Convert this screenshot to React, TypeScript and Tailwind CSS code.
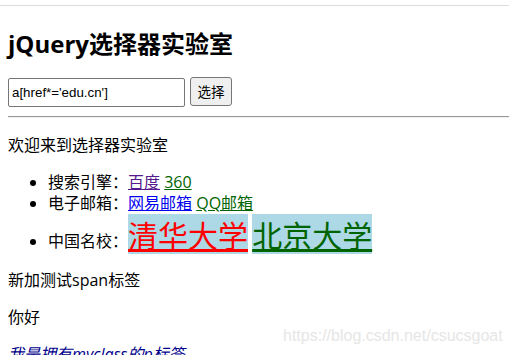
export default function App() {
  return (
    <div className="relative h-[355px] w-[509px] overflow-hidden bg-white text-black font-['Open_Sans','Noto_Sans_CJK_SC',sans-serif] text-[16px] leading-[21px]">
      <div className="h-[5px]" />
      <div className="border-t border-[#dcdcdc]" />

      <div className="px-[8px]">
        <h1 className="mt-[22px] text-[24px] leading-[32px] font-bold">jQuery选择器实验室</h1>

        <div className="mt-[17px] flex items-start gap-[5px]">
          <input
            type="text"
            defaultValue="a[href*='edu.cn']"
            className="mt-[1px] h-[29px] w-[177px] rounded-[2px] border border-[#767676] px-[3px] text-[13.33px] font-['Liberation_Sans',Arial,sans-serif] text-black outline-none"
          />
          <button className="h-[29px] w-[42px] rounded-[3px] border border-[#767676] bg-[#efefef] text-[13.5px] font-['Noto_Sans_CJK_SC',sans-serif] text-black">
            选择
          </button>
        </div>
      </div>

      <div className="ml-[8px] mt-[9px] border-t border-b border-t-[#9a9a9a] border-b-[#eeeeee]" />

      <div className="px-[8px]">
        <p className="mt-[17px]">欢迎来到选择器实验室</p>

        <ul className="mt-[16px] list-disc pl-[40px]">
          <li>
            搜索引擎：<a className="text-[#551a8b] underline">百度</a>{" "}
            <a className="text-[#006400] underline">360</a>
          </li>
          <li>
            电子邮箱：<a className="text-[#0000ee] underline">网易邮箱</a>{" "}
            <a className="text-[#006400] underline">QQ邮箱</a>
          </li>
          <li>
            中国名校：
            <a className="inline-block h-[40px] bg-[#add8e6] text-[30px] leading-[40px] text-[#ff0000] underline font-['Noto_Sans_CJK_SC',sans-serif]">
              清华大学
            </a>{" "}
            <a className="inline-block h-[40px] bg-[#add8e6] text-[30px] leading-[40px] text-[#006400] underline font-['Noto_Sans_CJK_SC',sans-serif]">
              北京大学
            </a>
          </li>
        </ul>

        <p className="mt-[16px]">
          新加测试<span>span</span>标签
        </p>
        <p className="mt-[16px]">你好</p>
        <p className="mt-[16px] italic text-[#00008b]">我是拥有myclass的p标签</p>
      </div>

      <div className="pointer-events-none absolute left-[283px] top-[326px] text-[16px] leading-[20px] text-[#e6e6e6] font-['Liberation_Sans',Arial,sans-serif]">
        https://blog.csdn.net/csucsgoat
      </div>
    </div>
  );
}
